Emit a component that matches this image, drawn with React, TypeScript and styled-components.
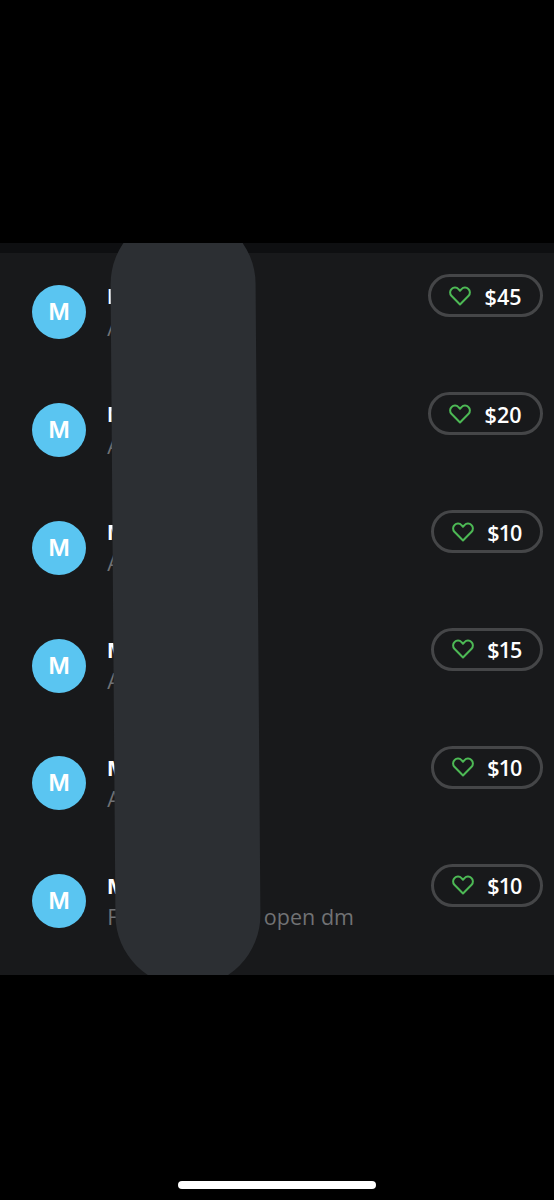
import React from 'react';
import styled, { createGlobalStyle } from 'styled-components';

const GlobalStyle = createGlobalStyle`
  * { box-sizing: border-box; }
  html, body { margin: 0; background: #000; }
  body { font-family: 'Open Sans', 'Noto Sans', sans-serif; overflow: hidden; }
`;

const Screen = styled.div`
  display: flex;
  flex-direction: column;
  justify-content: space-between;
  width: 554px;
  height: 1200px;
  padding: 243px 0 11.5px;
  background: #000;
`;

const Feed = styled.main`
  position: relative;
  height: 732px;
  overflow: hidden;
  background: #18191b;
`;

const FeedHeader = styled.div`
  height: 10px;
  background: #0e0f11;
`;

const Row = styled.article`
  display: flex;
  align-items: flex-start;
  height: 117.85px;
  padding: 0 11px 0 32px;
`;

const Avatar = styled.div`
  display: flex;
  align-items: center;
  justify-content: center;
  width: 54px;
  height: 54px;
  margin-top: 32px;
  border-radius: 50%;
  background: #5ac5f1;
  color: #fff;
  font-family: Inter, sans-serif;
  font-size: 23px;
  font-weight: 600;
  line-height: 54px;
`;

const Details = styled.div`
  flex: 1;
  margin: 26.4px 0 0 20px;
  line-height: 32.4px;
`;

const Name = styled.div`
  padding-left: 0.8px;
  color: #fff;
  font-size: 22px;
  font-weight: 700;
`;

const Note = styled.div`
  display: flex;
  padding-left: 1.2px;
  color: #717274;
  font-size: 21.5px;
  letter-spacing: 0.05px;
`;

const NoteEnd = styled.span`
  margin-left: 145.4px;
`;

const Pill = styled.div<{ $narrow: boolean }>`
  display: flex;
  align-items: center;
  justify-content: space-between;
  width: ${(p) => (p.$narrow ? 112.5 : 115)}px;
  height: 43px;
  margin-top: 21.4px;
  padding: 0 18.5px 0 17px;
  border: 3px solid #454648;
  border-radius: 22px;
`;

const Amount = styled.span<{ $narrow: boolean }>`
  padding-top: 1px;
  color: #fff;
  font-size: 21.5px;
  font-weight: 650;
  line-height: 37px;
  letter-spacing: ${(p) => (p.$narrow ? -0.9 : 0)}px;
`;

const Cover = styled.div`
  position: absolute;
  top: -31.3px;
  left: 112.5px;
  width: 144.5px;
  height: 774.5px;
  border-radius: 72.25px;
  background: #2c2f33;
  transform: rotate(-0.44deg);
`;

const HomeIndicator = styled.div`
  align-self: center;
  width: 198px;
  height: 7.5px;
  border-radius: 4px;
  background: #fff;
`;

const Heart = () => (
  <svg width="24" height="22" viewBox="0 0 24 22" fill="none" stroke="#4db955" strokeWidth="2" strokeLinejoin="round">
    <path d="M12 19.5 3.4 10.8C1.6 8.8 1.7 5.6 3.6 3.9C5.6 2 8.7 2.2 10.5 4.1L12 5.8L13.5 4.1C15.3 2.2 18.4 2 20.4 3.9C22.3 5.6 22.4 8.8 20.6 10.8Z" />
  </svg>
);

const payments = [
  { amount: '$45', initial: 'A' },
  { amount: '$20', initial: 'A' },
  { amount: '$10', initial: 'A' },
  { amount: '$15', initial: 'A' },
  { amount: '$10', initial: 'A' },
  { amount: '$10', initial: 'F', noteEnd: 'open dm' },
];

export default function App() {
  return (
    <>
      <GlobalStyle />
      <Screen>
        <Feed>
          <FeedHeader />
          {payments.map((p, i) => {
            const narrow = p.amount[1] === '1';
            return (
              <Row key={i}>
                <Avatar>M</Avatar>
                <Details>
                  <Name>M</Name>
                  <Note>
                    {p.initial}
                    {p.noteEnd && <NoteEnd>{p.noteEnd}</NoteEnd>}
                  </Note>
                </Details>
                <Pill $narrow={narrow}>
                  <Heart />
                  <Amount $narrow={narrow}>{p.amount}</Amount>
                </Pill>
              </Row>
            );
          })}
          <Cover />
        </Feed>
        <HomeIndicator />
      </Screen>
    </>
  );
}
